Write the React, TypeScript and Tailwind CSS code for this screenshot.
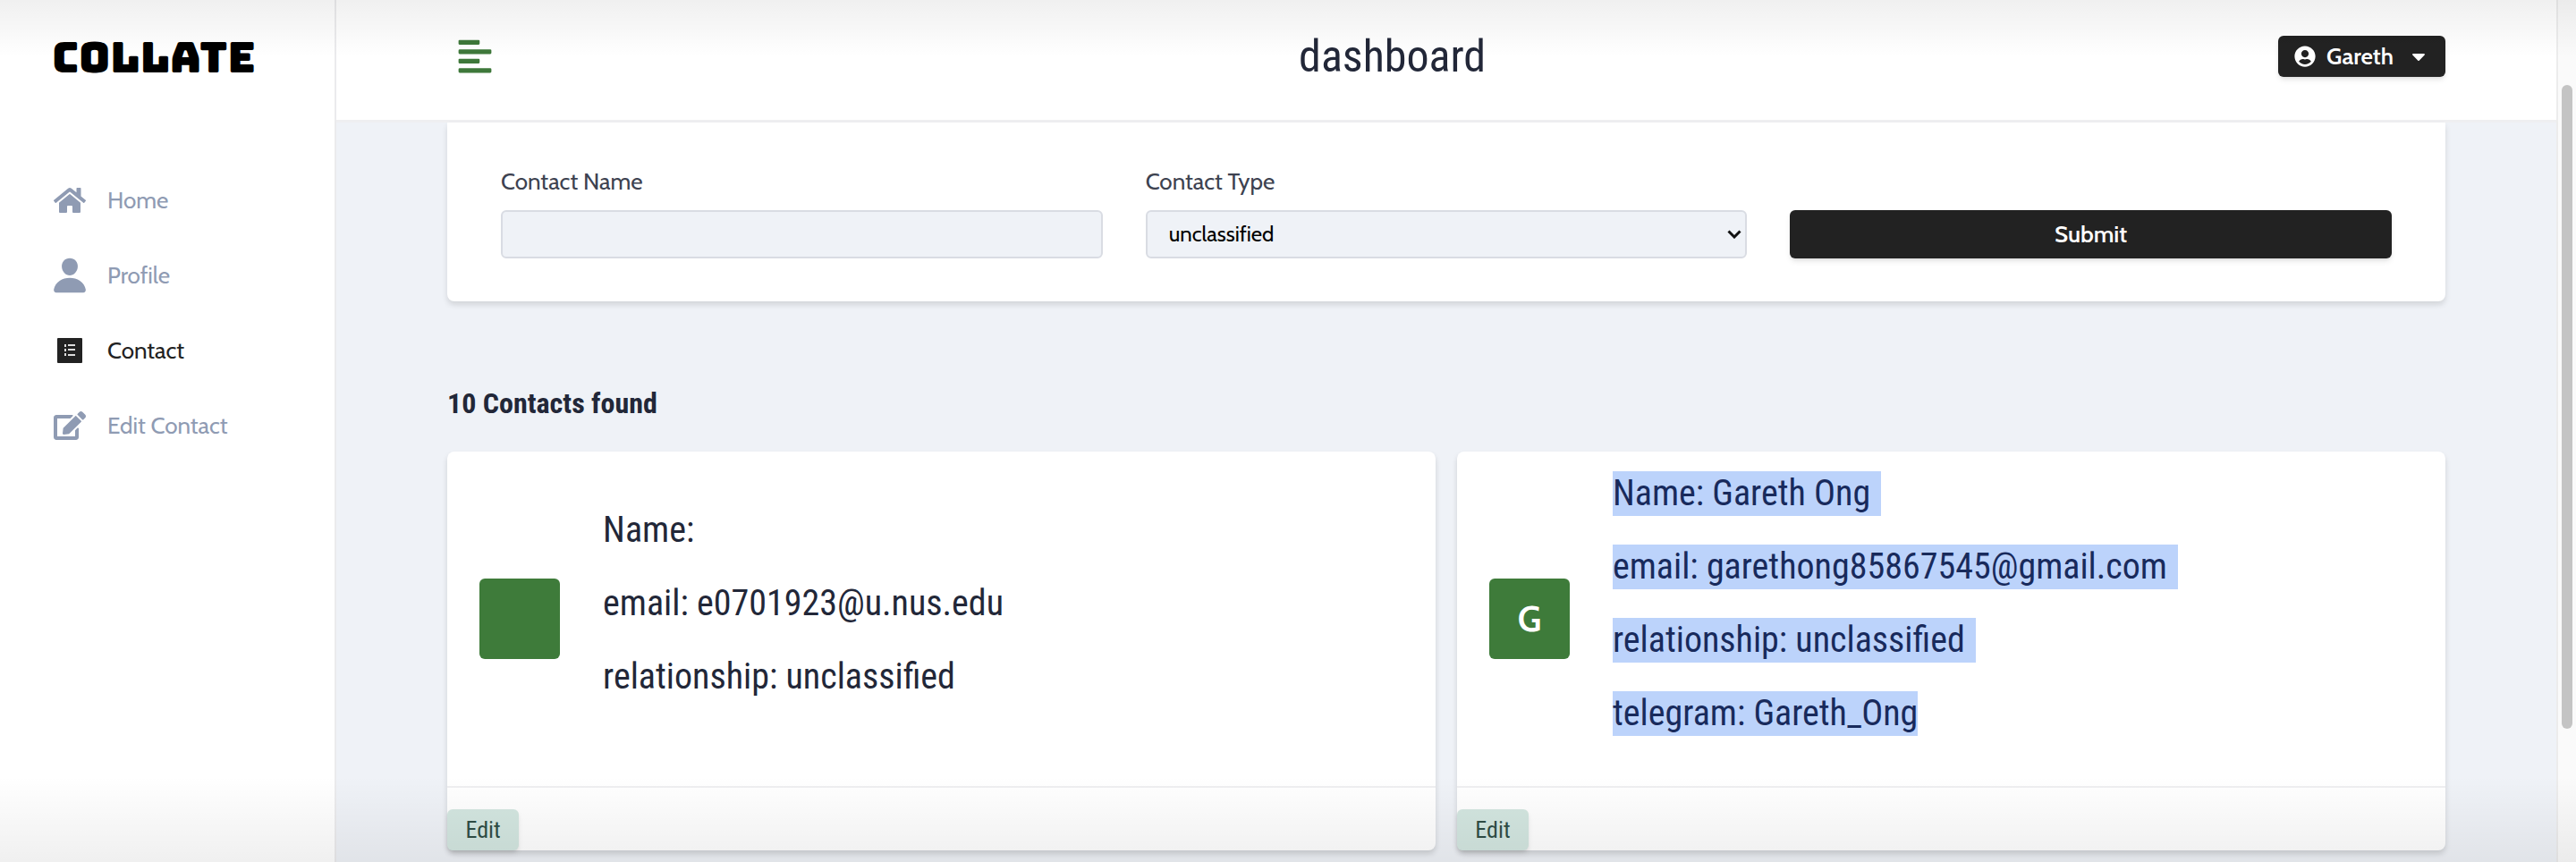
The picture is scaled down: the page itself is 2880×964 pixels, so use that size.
import React from 'react';
import { FaAlignLeft, FaCaretDown, FaEdit, FaHome, FaUserCircle } from 'react-icons/fa';
import { IoPerson } from 'react-icons/io5';

const heading = "font-['Roboto_Condensed','Liberation_Sans_Narrow',sans-serif]";

function ListIcon() {
  return (
    <svg viewBox="0 0 28 28" className="size-7" aria-hidden="true">
      <rect width="28" height="28" rx="1" fill="#222" />
      <g fill="#ddd">
        <rect x="8" y="7" width="2" height="3" />
        <rect x="8" y="12" width="2" height="3" />
        <rect x="8" y="17" width="2" height="3" />
        <rect x="12" y="7" width="8" height="2" />
        <rect x="12" y="12" width="8" height="2" />
        <rect x="12" y="18" width="8" height="2" />
      </g>
    </svg>
  );
}

const links = [
  { label: 'Home', icon: <FaHome />, active: false },
  { label: 'Profile', icon: <IoPerson className="size-11 shrink-0" />, active: false },
  { label: 'Contact', icon: <ListIcon />, active: true },
  { label: 'Edit Contact', icon: <FaEdit />, active: false },
];

interface Contact {
  initial: string;
  rows: string[];
  selected: boolean;
}

const contacts: Contact[] = [
  {
    initial: '',
    rows: ['Name:', 'email: e0701923@u.nus.edu', 'relationship: unclassified'],
    selected: false,
  },
  {
    initial: 'G',
    rows: [
      'Name: Gareth Ong',
      'email: garethong85867545@gmail.com',
      'relationship: unclassified',
      'telegram: Gareth_Ong',
    ],
    selected: true,
  },
];

function Sidebar() {
  return (
    <aside className="w-[376px] shrink-0 border-r-2 border-[#ebebed] bg-white">
      <div className="flex h-32 items-center pl-[58px] font-['Bungee','Inter',sans-serif] text-5xl font-normal text-black">
        COLLATE
      </div>
      <nav className="flex flex-col pt-[54px]">
        {links.map((link) => (
          <a
            key={link.label}
            href="#"
            className={`flex h-[84px] items-center gap-6 pl-[60px] text-[26px] ${link.active ? 'text-[#222]' : 'text-[#8f9bb3]'}`}
          >
            <span className="flex w-9 justify-center text-4xl">{link.icon}</span>
            {link.label}
          </a>
        ))}
      </nav>
    </aside>
  );
}

function Navbar() {
  return (
    <header className="flex h-[137px] items-center border-b-3 border-[#efeff1] bg-white pb-2">
      <div className="mx-auto flex w-[90%] items-center justify-between pl-3">
        <button aria-label="Toggle sidebar" className="text-[#3e783a]">
          <FaAlignLeft className="h-[42px] w-[38px]" />
        </button>
        <h3 className={`${heading} ml-4 text-[50px] leading-none text-[#222738]`}>dashboard</h3>
        <button className="flex h-[46px] items-center gap-3 rounded-md bg-[#222] px-[18px] text-[26px] font-semibold text-white shadow-md">
          <FaUserCircle className="size-6" />
          Gareth
          <FaCaretDown className="ml-1 size-6" />
        </button>
      </div>
    </header>
  );
}

function SearchForm() {
  return (
    <form
      onSubmit={(e) => e.preventDefault()}
      className="grid grid-cols-3 items-end gap-x-12 rounded-b-lg bg-white px-[60px] pt-12 pb-12 text-[26px] shadow-[0_4px_6px_rgba(0,0,0,0.12)]"
    >
      <div className="flex flex-col">
        <label htmlFor="name" className="mb-3.5 leading-9 text-[#3d4250]">
          Contact Name
        </label>
        <input
          id="name"
          type="text"
          className="h-[54px] w-full rounded-md border-2 border-[#d9dce3] bg-[#eff2f7] px-6"
        />
      </div>
      <div className="flex flex-col">
        <label htmlFor="type" className="mb-3.5 leading-9 text-[#3d4250]">
          Contact Type
        </label>
        <div className="relative flex">
          <select
            id="type"
            className="h-[54px] w-full appearance-none rounded-md border-2 border-[#d9dce3] bg-[#eff2f7] px-6 text-2xl text-black"
          >
            <option>unclassified</option>
          </select>
          <svg
            viewBox="0 0 16 10"
            className="pointer-events-none absolute top-[22px] right-1.5 h-2.5 w-4"
            fill="none"
            stroke="#111"
            strokeWidth="3"
            aria-hidden="true"
          >
            <path d="M1.5 1.5 8 8l6.500-6.500" />
          </svg>
        </div>
      </div>
      <button className="h-[54px] rounded-md bg-[#222] font-semibold text-white shadow-md">Submit</button>
    </form>
  );
}

function ContactCard({ initial, rows, selected }: Contact) {
  return (
    <article className="rounded-lg bg-white shadow-[0_4px_6px_rgba(0,0,0,0.14)]">
      <div className="flex h-[376px] items-center gap-12 border-b-2 border-[#efeff1] px-9">
        <div className="flex size-[90px] items-center justify-center rounded-md bg-[#3e7b3a] text-[40px] font-semibold text-white">
          {initial}
        </div>
        <div className={`${heading} flex flex-col pb-[34px] text-[40px] text-[#222738]`}>
          {rows.map((row, i) => (
            <h5 key={row} className="flex h-[82px] items-center whitespace-nowrap leading-[50px]">
              {selected ? (
                <span className={`bg-[#bcd3fb] text-[#182a5c] ${i < rows.length - 1 ? 'pr-3' : ''}`}>{row}</span>
              ) : (
                row
              )}
            </h5>
          ))}
        </div>
      </div>
      <footer className="flex pt-6">
        <button className={`${heading} h-[46px] w-20 rounded-md bg-[#d3e6e0] text-[26px] text-[#2f4d45] shadow-md`}>
          Edit
        </button>
      </footer>
    </article>
  );
}

export default function App() {
  return (
    <div className="relative flex min-h-screen bg-[#eff2f7] font-['Cabin','Lato',sans-serif]">
      <Sidebar />
      <div className="flex-1">
        <Navbar />
        <main className="mx-auto w-[90%]">
          <SearchForm />
          <h5 className={`${heading} mt-24 text-[32px] leading-9 font-bold text-[#222738]`}>10 Contacts found</h5>
          <section className="mt-9 grid grid-cols-2 gap-6">
            {contacts.map((c) => (
              <ContactCard key={c.rows[1]} {...c} />
            ))}
          </section>
        </main>
      </div>
      <div className="w-[22px] border-l-2 border-[#ececec] bg-[#fafafa] px-1 pt-[95px]">
        <div className="h-[720px] w-3 rounded-full bg-[#c4c4c4]" />
      </div>
      <div className="pointer-events-none absolute inset-x-0 top-0 h-16 bg-linear-to-b from-black/6 to-transparent" />
      <div className="pointer-events-none absolute inset-x-0 bottom-0 h-24 bg-linear-to-t from-black/6 to-transparent" />
    </div>
  );
}
